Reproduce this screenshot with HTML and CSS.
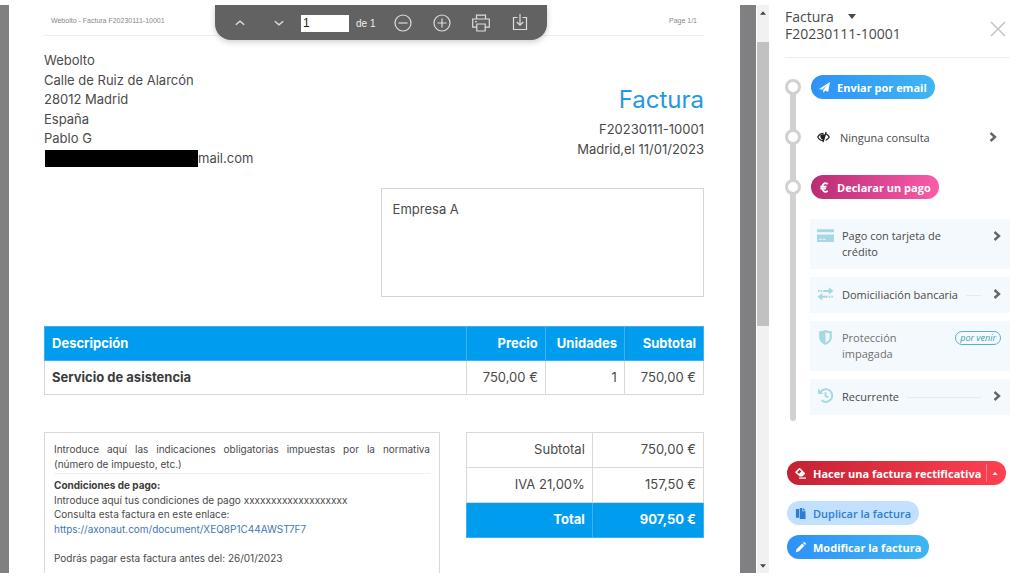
FILE: index.html
```html
<!DOCTYPE html>
<html lang="es">
<head>
<meta charset="utf-8">
<title>Factura F20230111-10001</title>
<link rel="stylesheet" href="styles.css">
</head>
<body>
<main class="viewer">
  <div class="toolbar" role="toolbar" aria-label="Visor">
    <button class="tool" type="button" aria-label="Página anterior"><svg class="arrow" viewBox="0 0 10 10"><path d="M1.5 6.5 5 3.5 8.500 6.500"/></svg></button>
    <button class="tool" type="button" aria-label="Página siguiente"><svg class="arrow" viewBox="0 0 10 10"><path d="M1.500 3.500 5 6.500 8.500 3.500"/></svg></button>
    <div class="pager">
      <input class="page-input" type="text" value="1" aria-label="Página">
      <span class="page-count">de 1</span>
    </div>
    <button class="tool" type="button" aria-label="Alejar"><svg viewBox="0 0 18 18"><circle cx="9" cy="9" r="8"/><path d="M4.500 9h9"/></svg></button>
    <button class="tool" type="button" aria-label="Acercar"><svg viewBox="0 0 18 18"><circle cx="9" cy="9" r="8"/><path d="M4.500 9h9M9 4.500v9"/></svg></button>
    <button class="tool" type="button" aria-label="Imprimir"><svg viewBox="0 0 18 18"><path d="M4.500 5V1.200h9V5M4.500 13.200H.700V5h16.600v8.200h-3.800M4.800 10h8.400v7H4.800zM3 7.600h1.800"/></svg></button>
    <button class="tool" type="button" aria-label="Descargar"><svg viewBox="0 0 18 18"><path d="M6.500 3.500h-4v12h13v-12h-4M9 0v11M5.800 8 9 11.200 12.200 8"/></svg></button>
  </div>

  <article class="sheet">
    <header class="sheet-head"><span>Webolto - Factura F20230111-10001</span><span>Page 1/1</span></header>
    <section class="parties">
      <address class="sender">
        <div>Webolto</div>
        <div>Calle de Ruiz de Alarcón</div>
        <div>28012 Madrid</div>
        <div>España</div>
        <div>Pablo G</div>
        <div class="email"><span class="redacted"></span>mail.com</div>
      </address>
      <div class="doc-title">
        <h1>Factura</h1>
        <div>F20230111-10001</div>
        <div>Madrid,el 11/01/2023</div>
      </div>
    </section>
    <section class="client">Empresa A</section>
    <table class="lines">
      <thead><tr><th class="desc">Descripción</th><th>Precio</th><th>Unidades</th><th>Subtotal</th></tr></thead>
      <tbody><tr><th class="desc" scope="row">Servicio de asistencia</th><td>750,00 €</td><td>1</td><td>750,00 €</td></tr></tbody>
    </table>
    <section class="bottom">
      <div class="notes">
        <p class="legal">Introduce aquí las indicaciones obligatorias impuestas por la normativa (número de impuesto, etc.)</p>
        <p><strong>Condiciones de pago:</strong><br>Introduce aquí tus condiciones de pago xxxxxxxxxxxxxxxxxxx<br>Consulta esta factura en este enlace:<br><a href="#documento">https://axonaut.com/document/XEQ8P1C44AWST7F7</a></p>
        <p class="due">Podrás pagar esta factura antes del: 26/01/2023</p>
      </div>
      <table class="totals">
        <tbody>
          <tr><td class="label">Subtotal</td><td>750,00 €</td></tr>
          <tr><td class="label">IVA 21,00%</td><td>157,50 €</td></tr>
          <tr class="grand"><th class="label" scope="row">Total</th><td>907,50 €</td></tr>
        </tbody>
      </table>
    </section>
  </article>
  <div class="scrollbar">
    <button class="scroll-btn" type="button" aria-label="Subir"><svg viewBox="0 0 7 4"><path d="M0 4 3.500 0 7 4z"/></svg></button>
    <div class="track"><div class="thumb"></div></div>
    <button class="scroll-btn" type="button" aria-label="Bajar"><svg viewBox="0 0 7 4"><path d="M0 0 3.500 4 7 0z"/></svg></button>
  </div>
</main>

<aside class="side">
  <header class="side-head">
    <h2><button class="type" type="button">Factura <svg viewBox="0 0 8 5"><path d="M0 0h8L4 5z"/></svg></button><span>F20230111-10001</span></h2>
    <button class="close" type="button" aria-label="Cerrar"><svg viewBox="0 0 16 16"><path d="m1 1 14 14M15 1 1 15"/></svg></button>
  </header>

  <div class="timeline">
    <div class="step"><i class="dot"></i>
      <button class="pill blue" type="button"><svg viewBox="0 0 12 12"><path d="M0 7.500 12 0 10 11 6.800 9.200 5 12 4.500 8.800 9.500 3 3.300 8.500z"/></svg>Enviar por email</button>
    </div>
    <div class="step"><i class="dot"></i>
      <a class="query" href="#consultas"><svg class="eye" viewBox="0 0 14 12"><path class="lid" d="M7 2C4 2 2 3.600.800 6 2 8.400 4 10 7 10M9.300 2.400c1.800.700 3 2 3.900 3.600-.800 1.600-2.100 2.900-3.900 3.600"/><path d="M3.500 4.200Q6 2.200 9 3.500L7.300 9.500C4.800 8.800 3.300 7 3.500 4.200z"/><path class="lid" d="M9.800.400 6.500 11.600"/></svg><span>Ninguna consulta</span><svg class="chev" viewBox="0 0 8 10"><path d="m1.500 1 4.500 4-4.500 4"/></svg></a>
    </div>
    <div class="step"><i class="dot"></i>
      <button class="pill pink" type="button"><svg viewBox="0 0 12 12"><path class="stroke" d="M9.500 2.300C6.200-.200 3.500 2.200 3.500 6s2.700 6.200 6 3.700M1.500 5h6.700M1.500 7.200h6"/></svg>Declarar un pago</button>
    </div>

    <nav class="cards">
      <a class="card" href="#tarjeta"><svg class="kind" viewBox="0 0 16 14"><path d="M0 1h16v3H0zM0 6h16v7H0z"/><path d="M2 10.500h2.500M5.500 10.500H8" stroke="#f2f8fd"/></svg><span class="name">Pago con tarjeta de crédito</span><svg class="chev" viewBox="0 0 8 10"><path d="m1.500 1 4.500 4-4.500 4"/></svg></a>
      <a class="card" href="#domiciliacion"><svg class="kind" viewBox="0 0 16 14"><path d="M11 1v2.800h-5v1.700h5V8l4.500-3.300zM5 6.500v2.700h5v1.700H5v2.600L.500 10.200zM1 3.800h1.500v1.700H1zM3.500 3.800H5v1.700H3.500zM11 9.200h1.500v1.700H11zM13.500 9.200H15v1.700h-1.500z"/></svg><span class="name">Domiciliación bancaria</span><i class="leader"></i><svg class="chev" viewBox="0 0 8 10"><path d="m1.500 1 4.500 4-4.500 4"/></svg></a>
      <a class="card soon" href="#proteccion"><svg class="kind" viewBox="0 0 16 14"><path fill-rule="evenodd" d="M2 1.200Q5 1.200 8 0q3 1.200 6 1.200V6c0 4-2.500 6.500-6 8-3.500-1.500-6-4-6-8zM8 2v10c2.500-1.200 4-3 4-6V3Q10 3 8 2z"/></svg><span class="name">Protección impagada</span><span class="tag">por venir</span></a>
      <a class="card" href="#recurrente"><svg class="kind" viewBox="0 0 16 14"><path class="stroke" d="M3.500 3.500A6 6 0 1 1 4.300 11.500M8 4v3.500l2.500 1.300"/><path d="M1 .500v5h5z"/></svg><span class="name">Recurrente</span><i class="leader"></i><svg class="chev" viewBox="0 0 8 10"><path d="m1.500 1 4.500 4-4.500 4"/></svg></a>
    </nav>
  </div>

  <div class="actions">
    <div class="split">
      <button class="pill red" type="button"><svg viewBox="0 0 12 12"><path fill-rule="evenodd" d="M.500 4 4.200.300a1 1 0 0 1 1.400 0l5 5a1 1 0 0 1 0 1.400L8 9.300H5.200L.500 5.200a1 1 0 0 1 0-1.200zM2.300 4.600l2 1.800L7 3.800 5 1.800z"/><path d="M4.500 10.300H12v1.400H4.500z"/></svg>Hacer una factura rectificativa</button>
      <button class="more" type="button" aria-label="Más opciones"><svg viewBox="0 0 7 4"><path d="M0 4 3.500 0 7 4z"/></svg></button>
    </div>
    <button class="pill light" type="button"><svg viewBox="0 0 12 12"><path d="M1 1h3.500v9.500H1zM5.200 0H8v3.500h3.500V12H5.200zM8.800 0l2.700 2.700H8.800z"/></svg>Duplicar la factura</button>
    <button class="pill blue" type="button"><svg viewBox="0 0 12 12"><path d="M.800 11.200 1.600 8 8 1.700l2.300 2.300L4 10.400zM8.700 1l.800-.800a.800.800 0 0 1 1.100 0l1.200 1.200a.800.800 0 0 1 0 1.100l-.800.800z"/></svg>Modificar la factura</button>
  </div>
</aside>
</body>
</html>
```
FILE: styles.css
```css
* { box-sizing: border-box; }
body {
  margin: 0;
  height: 100vh;
  padding: 5px 0 13px;
  display: flex;
  background: #fff;
  color: #4a4a4a;
  font-family: "Open Sans", sans-serif;
  font-size: 11px;
}
button { font: inherit; color: inherit; border: 0; background: none; padding: 0; }
a { color: inherit; text-decoration: none; }
svg { display: block; flex: none; fill: currentColor; }
.stroke { fill: none; stroke: currentColor; stroke-width: 2; }

/* document viewer */
.viewer {
  position: relative;
  flex: 1;
  min-width: 0;
  display: flex;
  padding-left: 9px;
  background: #808082;
  overflow: hidden;
}
.toolbar {
  position: absolute;
  top: 0;
  left: 215px;
  right: 222px;
  height: 35px;
  padding: 1px 16px 0;
  display: flex;
  align-items: center;
  gap: 21px;
  background: #626262;
  color: #ddd;
  border-radius: 0 0 16px 16px;
  box-shadow: 0 2px 6px rgba(0, 0, 0, .2);
  font: 10px "Liberation Sans", sans-serif;
}
.tool svg { width: 18px; height: 18px; fill: none; stroke: currentColor; stroke-width: 1.2; }
.tool svg.arrow { height: 12px; }
.pager { display: flex; align-items: center; gap: 7px; margin: 0 -2px 0 -8px; }
.page-input {
  width: 48px;
  height: 17px;
  padding: 0 2px;
  border: 0;
  background: #fff;
  color: #222;
  font: 12px "Liberation Sans", sans-serif;
}
.page-count { color: #eee; white-space: nowrap; }

.sheet {
  flex: 1;
  min-width: 0;
  margin-right: 16px;
  padding: 0 36px 0 35px;
  display: flex;
  flex-direction: column;
  background: #fff;
  font: 13px/1.5 Inter, sans-serif;
}
.sheet-head {
  display: flex;
  justify-content: space-between;
  padding: 11px 7px 9px;
  border-bottom: 1px solid #eee;
  color: #888;
  font: 7px/10px "Liberation Sans", sans-serif;
}
.parties { display: flex; justify-content: space-between; padding-top: 15px; }
.sender { font-style: normal; }
.email { display: flex; align-items: center; }
.redacted { width: 153px; height: 17px; margin-left: 1px; background: #000; }
.doc-title { padding-top: 34px; text-align: right; }
h1 { margin: 0 0 5px; font-size: 24px; font-weight: 400; line-height: 30px; color: #2499e0; }
.client {
  align-self: flex-end;
  width: 49%;
  height: 109px;
  margin-top: 20px;
  padding: 11px;
  border: 1px solid #d4d4d4;
}
table { border-collapse: collapse; }
td, th { height: 34px; padding: 0 7px; border: 1px solid #d9d9d9; text-align: right; }
.lines { margin-top: 29px; width: 100%; }
.lines thead th, .grand th, .grand td {
  background: #009cee;
  border-color: #3cb2f1;
  color: #fff;
  font-weight: 700;
}
.lines th, .lines td { width: 12%; }
.lines .desc { width: 64%; text-align: left; }
.lines tbody .desc { font-weight: 700; color: #3c3c3c; }
.bottom { flex: 1; display: flex; align-items: stretch; justify-content: space-between; margin-top: 37px; }
.notes {
  width: 60%;
  padding: 9px 9px 0;
  border: 1px solid #d9d9d9;
  border-bottom: 0;
  font-size: 10px;
  line-height: 1.45;
}
.notes p { margin: 0; }
.notes strong { font-weight: 700; color: #3c3c3c; }
.notes a { color: #3f78b5; }
.notes .legal { text-align: justify; padding-bottom: 2px; margin-bottom: 4px; border-bottom: 1px solid #f0f0f0; }
.notes .due { margin-top: 15px; }
.totals { width: 36%; align-self: flex-start; }
.totals td, .totals th { height: 35px; }
.totals .label { width: 53%; }

.scrollbar {
  width: 13px;
  display: flex;
  flex-direction: column;
  background: #f1f1f1;
  border-left: 1px solid #fff;
}
.scroll-btn { height: 15px; display: grid; place-items: center; color: #444; }
.scroll-btn svg { width: 6px; height: 4px; }
.track { flex: 1; padding-top: 22px; }
.thumb { height: 55%; background: #c1c1c1; }

/* side panel */
.side { width: 255px; padding: 0 14px 0 16px; }
.side-head {
  display: flex;
  justify-content: space-between;
  padding: 3px 4px 15px 0;
  border-bottom: 1px solid #eee;
}
.side-head h2 { margin: 0; font-size: 14px; line-height: 17px; font-weight: 400; }
.side-head h2 span { display: block; }
.type { display: flex; align-items: center; gap: 14px; }
.type svg { width: 8px; height: 5px; }
.close { padding-top: 8px; color: #c4c4c4; }
.close svg { width: 16px; height: 16px; fill: none; stroke: currentColor; stroke-width: 1.5; }

.timeline { position: relative; display: flex; flex-direction: column; gap: 26px; padding: 17px 0 6px; }
.timeline::before {
  content: "";
  position: absolute;
  top: 28px;
  bottom: 0;
  left: 5px;
  width: 6px;
  border-radius: 3px;
  background: #d1d1d1;
}
.step { position: relative; display: flex; align-items: center; gap: 10px; height: 24px; }
.dot { width: 16px; height: 16px; border: 3px solid #d1d1d1; border-radius: 50%; background: #fff; }
.query { flex: 1; display: flex; align-items: center; gap: 10px; padding: 0 13px 0 6px; }
.query span { flex: 1; }
.eye { width: 13px; height: 12px; color: #222; }
.lid { fill: none; stroke: currentColor; stroke-width: 1.3; }
.chev { width: 8px; height: 10px; fill: none; stroke: #666; stroke-width: 2.4; }

.pill {
  display: flex;
  align-items: center;
  gap: 7px;
  height: 24px;
  padding: 0 8px;
  border-radius: 12px;
  color: #fff;
  font-weight: 700;
  white-space: nowrap;
}
.pill svg { width: 11px; height: 11px; }
.blue { background: linear-gradient(90deg, #2e92f8, #3fb5f2); }
.pink { background: linear-gradient(90deg, #b92c74, #fa5ca9); }
.light { background: #c2e0ff; color: #2f7fd0; font-weight: 600; }
.red { padding-right: 5px; }

.cards { display: flex; flex-direction: column; gap: 8px; margin: -6px 0 0 25px; }
.card {
  display: flex;
  align-items: center;
  gap: 8px;
  min-height: 36px;
  padding: 9px;
  padding-left: 7px;
  background: #f4f9fd;
  line-height: 16px;
}
.card .kind { align-self: flex-start; width: 17px; height: 15px; color: #a5d8e3; }
.kind .stroke { stroke-width: 1.8; }
.card .chev { align-self: flex-start; margin-top: 3px; }
.card .name { max-width: 125px; }
.card .chev, .tag { margin-left: auto; }
.leader { flex: 1; border-bottom: 1px solid #e3eaf0; }
.leader + .chev { margin-left: 4px; }
.soon { color: #707070; }
.soon .name { width: 70px; }
.tag {
  align-self: flex-start;
  margin-top: 1px;
  padding: 0 4px;
  border: 1px solid #57b5c0;
  border-radius: 7px;
  color: #3ba2b0;
  font-size: 9px;
  font-style: italic;
  line-height: 12px;
}

.actions { display: flex; flex-direction: column; align-items: flex-start; gap: 10px; margin: 40px 0 0 2px; }
.split { display: flex; align-items: center; margin-bottom: 6px; border-radius: 13px; background: linear-gradient(90deg, #c32234, #ff4050); }
.more { height: 18px; padding: 0 8px 0 5px; border-left: 1px solid #ff8089; color: #fff; }
.more svg { width: 6px; height: 3px; }
```
